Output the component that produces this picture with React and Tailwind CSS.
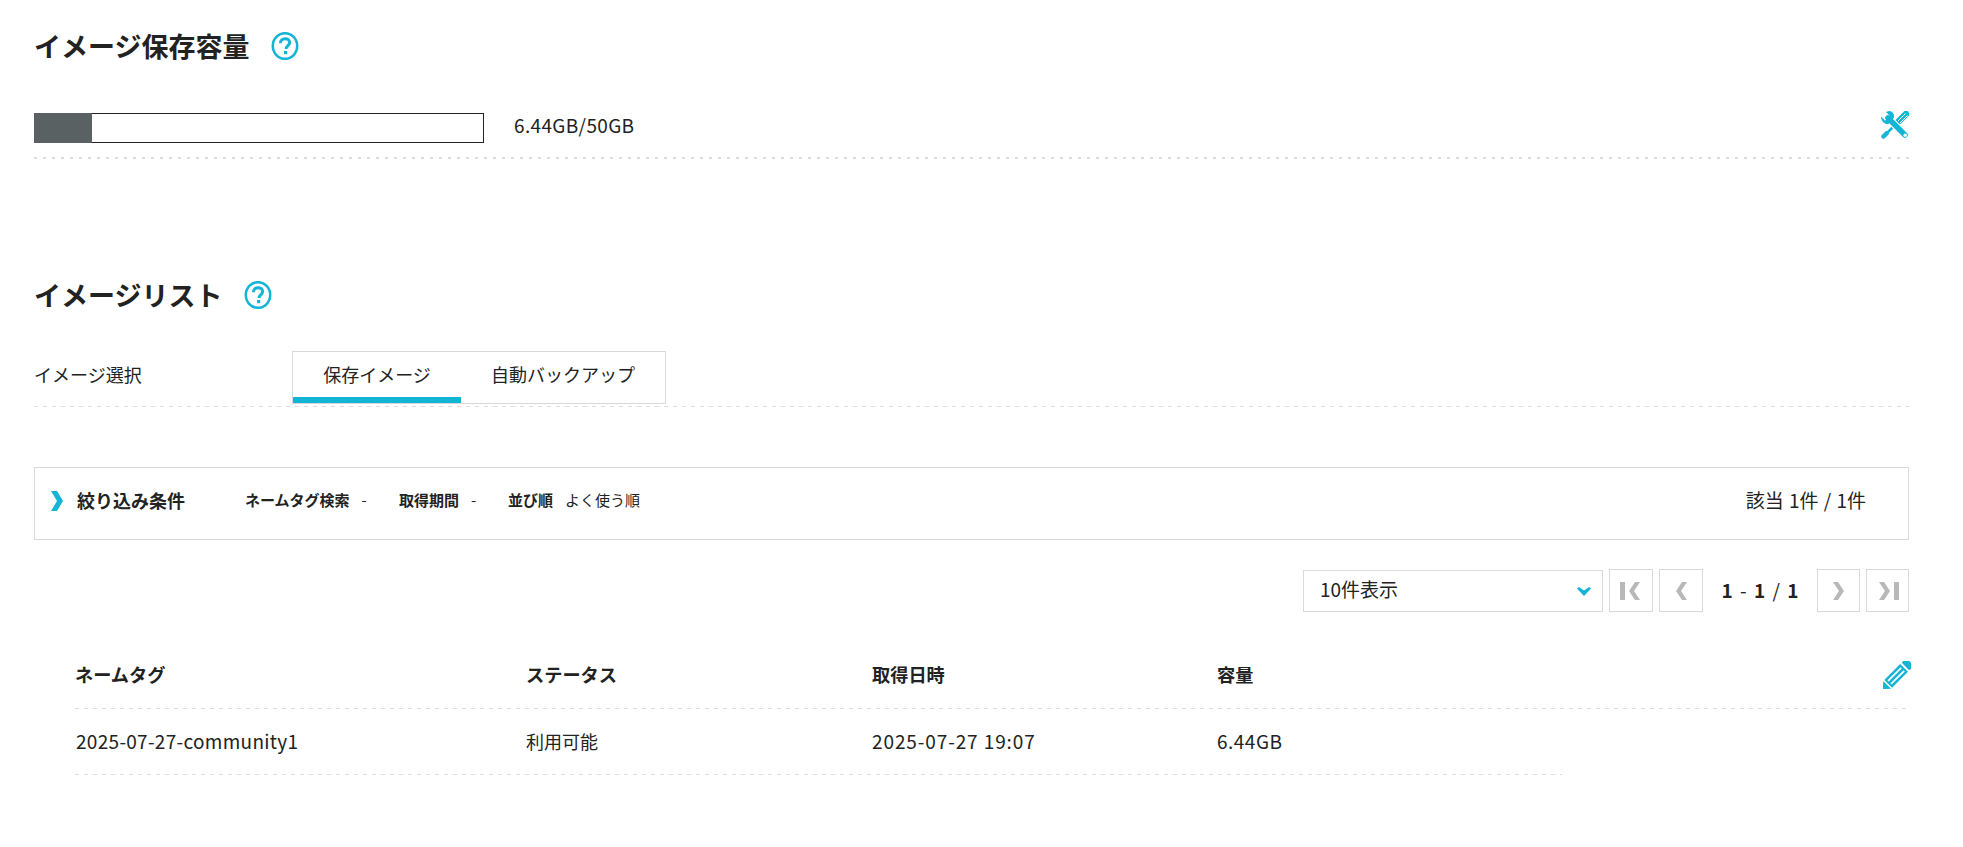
const FONT = "font-['Noto_Sans_CJK_JP','Noto_Sans',sans-serif]";

const HelpIcon = () => {
  return (
    <svg width="28" height="28" viewBox="0 0 28 28" className="shrink-0">
      <ellipse cx="14" cy="14" rx="12.2" ry="12.8" fill="none" stroke="#14b4d6" strokeWidth="2.5" />
      <path d="M9.4 11.2c0-2.900 2.100-4.500 4.700-4.500s4.500 1.500 4.500 3.800c0 3.400-3.500 3.400-3.500 6.400" fill="none" stroke="#14b4d6" strokeWidth="3" />
      <rect x="13" y="19" width="3.200" height="3.200" fill="#14b4d6" />
    </svg>
  );
};

const ToolIcon = () => {
  return (
    <svg width="28" height="28" viewBox="0 0 28 28">
      {/* screwdriver */}
      <path d="M25 3 17.500 10.500" stroke="#14b4d6" strokeWidth="6.500" strokeLinecap="round" />
      <path d="M24.500 2.500 17 10M26.500 4.500 19 12" stroke="#fff" strokeWidth="1" />
      <path d="M15 13 5 23" stroke="#14b4d6" strokeWidth="2.500" />
      <path d="M5.500 22.500 2.500 25.500" stroke="#14b4d6" strokeWidth="4.500" strokeLinecap="round" />
      {/* wrench */}
      <path d="M7 7 24 24" stroke="#fff" strokeWidth="8" />
      <path d="M7 7 24 24" stroke="#14b4d6" strokeWidth="5.500" strokeLinecap="round" />
      <path d="M0 5.500 4 9.500 7.500 8.500 9 5 5 1 8 0c3.500 0 5.500 3 5 6.500L7.500 13C3.500 13.500 0 10 0 5.500z" fill="#14b4d6" />
      <circle cx="24.200" cy="24.200" r="1.700" fill="#fff" />
    </svg>
  );
};

const PencilIcon = () => {
  return (
    <svg width="28" height="28" viewBox="0 0 28 28" fill="#14b4d6">
      <g transform="rotate(45 14 14)">
        <rect x="8.500" y="-4.500" width="11" height="6.500" rx="1" />
        <path d="M8.500 4h11v22.500h-11zM11 6v18.500h1.700V6zM15.300 6v18.500H17V6z" fillRule="evenodd" />
        <path d="M8.500 28h11L14 34z" />
      </g>
    </svg>
  );
};

// thick dots under the storage bar
const DotLine = () => {
  return <div className="h-[2px] bg-[repeating-linear-gradient(90deg,#dcdcdc_0,#dcdcdc_3px,transparent_3px,transparent_9px)]" />;
};

const DashLine = ({ className }) => {
  return <div className={`h-px bg-[repeating-linear-gradient(90deg,#dcdcdc_0,#dcdcdc_4px,transparent_4px,transparent_9px)] ${className}`} />;
};

const TabButton = ({ label, active, width }) => {
  return (
    <div className={`${width} h-full flex items-start justify-center pt-[9px] relative text-[18px] text-[#222]`}>
      {label}
      {active ? <div className="absolute left-0 right-0 bottom-0 h-[6px] bg-[#14b4d6]" /> : ""}
    </div>
  );
};

const PagerButton = ({ width, children }) => {
  return (
    <div className={`${width} h-[43px] border border-[#d9d9d9] flex items-center justify-center`}>
      <svg width="26" height="24" viewBox="0 0 26 24" fill="#b8b8b8">
        {children}
      </svg>
    </div>
  );
};

const FilterItem = ({ label, value, className }) => {
  return (
    <div className={`flex items-center text-[15px] text-[#222] ${className}`}>
      <span className="font-bold">{label}</span>
      <span className="ml-3">{value}</span>
    </div>
  );
};

const Cols = ({ children, className }) => {
  return <div className={`flex items-center ${className}`}>{children}</div>;
};

export default function App() {
  return (
    <div className={`${FONT} bg-white w-[1963px] h-[847px] overflow-hidden pl-[34px] pr-[54px] text-[#222]`}>
      <div className="flex items-center h-[46px] mt-[23px]">
        <h2 className="text-[27px] font-bold w-[237px]">イメージ保存容量</h2>
        <HelpIcon />
      </div>

      <div className="flex items-center h-[46px] mt-[36px]">
        <div className="w-[450px] h-[30px] border border-[#222] relative">
          <div className="absolute -top-px -left-px h-[30px] w-[58px] bg-[#5a6163]" />
        </div>
        <span className="ml-[30px] mb-[5px] text-[19px] tracking-[0.35px]">6.44GB/50GB</span>
        <div className="ml-auto mb-[6px]">
          <ToolIcon />
        </div>
      </div>
      <div className="mt-[6px]">
        <DotLine />
      </div>

      <div className="flex items-center h-[46px] mt-[113px]">
        <h2 className="text-[27px] font-bold w-[210px]">イメージリスト</h2>
        <HelpIcon />
      </div>

      <div className="flex items-end h-[53px] mt-[33px]">
        <span className="text-[18px] w-[258px] self-center mb-[7px]">イメージ選択</span>
        <div className="flex h-[53px] w-[374px] border border-[#d9d9d9]">
          <TabButton label="保存イメージ" active width="w-[168px]" />
          <TabButton label="自動バックアップ" width="w-[204px]" />
        </div>
      </div>
      <DashLine className="mt-[2px]" />

      <div className="flex items-center h-[73px] mt-[60px] border border-[#d9d9d9] pl-[16px] pr-[42px] pb-[6px]">
        <svg width="12" height="20" viewBox="0 0 12 20" fill="#14b4d6">
          <path d="M0 0h6l6 10-6 10H0l6-10z" />
        </svg>
        <span className="ml-[14px] text-[18px] font-bold w-[168px]">絞り込み条件</span>
        <FilterItem label="ネームタグ検索" value="-" className="w-[154px]" />
        <FilterItem label="取得期間" value="-" className="w-[109px]" />
        <FilterItem label="並び順" value="よく使う順" />
        <span className="ml-auto text-[19px] [word-spacing:1px]">該当 1件 / 1件</span>
      </div>

      <div className="flex items-center justify-end mt-[29px] gap-[6px]">
        <div className="w-[300px] h-[42px] border border-[#d9d9d9] flex items-center justify-between pl-[16px] pr-[11px] pb-[2px] text-[19px]">
          10件表示
          <svg width="14" height="9" viewBox="0 0 14 9" fill="#14b4d6" className="mt-1">
            <path d="M0 1.500 2 0l5 3.500L12 0l2 1.500L7 9z" />
          </svg>
        </div>
        <PagerButton width="w-[44px]">
          <path d="M2 3h5v18H2zM17 3h5l-6 9 6 9h-5l-6-9z" />
        </PagerButton>
        <PagerButton width="w-[44px]">
          <path d="M11 3h5l-6 9 6 9h-5l-6-9z" transform="translate(3 0)" />
        </PagerButton>
        <div className="w-[102px] text-center text-[19px] font-bold [word-spacing:3px]">
          1 <span className="font-normal">-</span> 1 <span className="font-normal">/</span> 1
        </div>
        <PagerButton width="w-[43px]">
          <path d="M7 3h5l6 9-6 9H7l6-9z" />
        </PagerButton>
        <PagerButton width="w-[43px]">
          <path d="M4 3h5l6 9-6 9H4l6-9zM19 3h5v18h-5z" />
        </PagerButton>
      </div>

      <div className="ml-[41px] mt-[30px] text-[18px]">
        <Cols className="h-[66px] font-bold text-[18.2px]">
          <div className="w-[451px]">ネームタグ</div>
          <div className="w-[346px]">ステータス</div>
          <div className="w-[345px]">取得日時</div>
          <div>容量</div>
          <div className="ml-auto -mr-[2px]">
            <PencilIcon />
          </div>
        </Cols>
        <DashLine className="w-[1832px]" />
        <Cols className="h-[65px]">
          <div className="w-[451px] pl-px text-[19px] tracking-[0.3px]">2025-07-27-community1</div>
          <div className="w-[346px]">利用可能</div>
          <div className="w-[345px] text-[19px] tracking-[0.9px]">2025-07-27 19:07</div>
          <div className="text-[19px] tracking-[0.5px]">6.44GB</div>
        </Cols>
        <DashLine className="w-[1487px]" />
      </div>
    </div>
  );
}
